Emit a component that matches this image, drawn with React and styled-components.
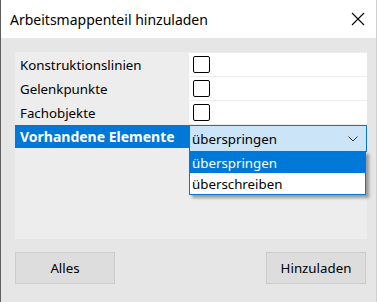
import { Fragment } from "react"
import styled, { createGlobalStyle } from "styled-components"

const Global = createGlobalStyle`
html, body {
    margin: 0;
    padding: 0;
}
body {
    font-family: "Noto Sans", "Open Sans", sans-serif;
    background: #e6e6e6;
}
`

const Window = styled.div`
width: 377px;
height: 302px;
box-sizing: border-box;
border-left: 1px solid #5e5e5e;
border-right: 1px solid #d0d0d0;
background: #e6e6e6;
display: flex;
flex-direction: column;
`
const TitleBar = styled.div`
height: 38px;
flex: none;
background: #ffffff;
display: flex;
align-items: center;
justify-content: space-between;
padding: 0 10px 0 9px;
`
const Title = styled.span`
font-size: 14px;
color: #000;
`
const Close = styled.svg`
width: 14px;
height: 14px;
margin-right: 1px;
`
const Body = styled.div`
flex: 1;
display: flex;
flex-direction: column;
padding: 14px 9px 0 14px;
`
const Panel = styled.div`
height: 187px;
background: #ededed;
display: grid;
grid-template-columns: 174px 1fr;
grid-auto-rows: 24px;
padding-top: 1px;
box-sizing: border-box;
position: relative;
`
const Label = styled.div`
font-size: ${p => p.active ? "14px" : "13.3px"};
padding-left: 5px;
display: flex;
align-items: center;
height: 23px;
color: ${p => p.active ? "#ffffff" : "#000000"};
background: ${p => p.active ? "#0078d7" : "transparent"};
font-weight: ${p => p.active ? 700 : 400};
`
const Value = styled.div`
background: #ffffff;
height: 23px;
display: flex;
align-items: center;
padding-left: 4px;
`
const Check = styled.div`
width: 15px;
height: 15px;
border: 1px solid #000;
border-radius: 2px;
background: #fff;
`
const Combo = styled.div`
height: 27px;
box-sizing: border-box;
border: 1px solid #0078d7;
background: #cce4f7;
display: flex;
align-items: center;
justify-content: space-between;
padding: 0 8px 0 2px;
font-size: 13.3px;
color: #000;
position: relative;
z-index: 1;
`
const Chevron = styled.svg`
width: 10px;
height: 6px;
`
const List = styled.div`
position: absolute;
left: 174px;
top: 99px;
width: 177px;
box-sizing: border-box;
border: 1px solid #0078d7;
background: #ffffff;
box-shadow: 3px 3px 3px rgba(0, 0, 0, 0.35);
z-index: 2;
`
const Option = styled.div`
height: 21px;
font-size: 13.3px;
display: flex;
align-items: center;
padding-left: 2px;
color: ${p => p.selected ? "#ffffff" : "#000000"};
background: ${p => p.selected ? "#0078d7" : "#ffffff"};
`
const Buttons = styled.div`
display: flex;
justify-content: space-between;
margin-top: 13px;
padding-right: 1px;
`
const Button = styled.button`
width: 100px;
height: 32px;
box-sizing: border-box;
border: 1px solid #cccccc;
background: #dddddd;
font-family: inherit;
font-size: 13.3px;
color: #000;
padding: 0;
`

const App = () => {
    const rows = ["Konstruktionslinien", "Gelenkpunkte", "Fachobjekte"]
    return (
        <Window>
            <Global/>
            <TitleBar>
                <Title>Arbeitsmappenteil hinzuladen</Title>
                <Close viewBox="0 0 14 14">
                    <path d="M1 1 L13 13 M13 1 L1 13" stroke="#000" strokeWidth="1.1" fill="none"/>
                </Close>
            </TitleBar>
            <Body>
                <Panel>
                    {rows.map(r => (
                        <Fragment key={r}>
                            <Label>{r}</Label>
                            <Value><Check/></Value>
                        </Fragment>
                    ))}
                    <Label active>Vorhandene Elemente</Label>
                    <Combo>
                        überspringen
                        <Chevron viewBox="0 0 10 6">
                            <path d="M0.5 0.5 L5 5 L9.5 0.5" stroke="#333" strokeWidth="1" fill="none"/>
                        </Chevron>
                    </Combo>
                    <List>
                        <Option selected>überspringen</Option>
                        <Option>überschreiben</Option>
                    </List>
                </Panel>
                <Buttons>
                    <Button>Alles</Button>
                    <Button>Hinzuladen</Button>
                </Buttons>
            </Body>
        </Window>
    )
}

export default App
